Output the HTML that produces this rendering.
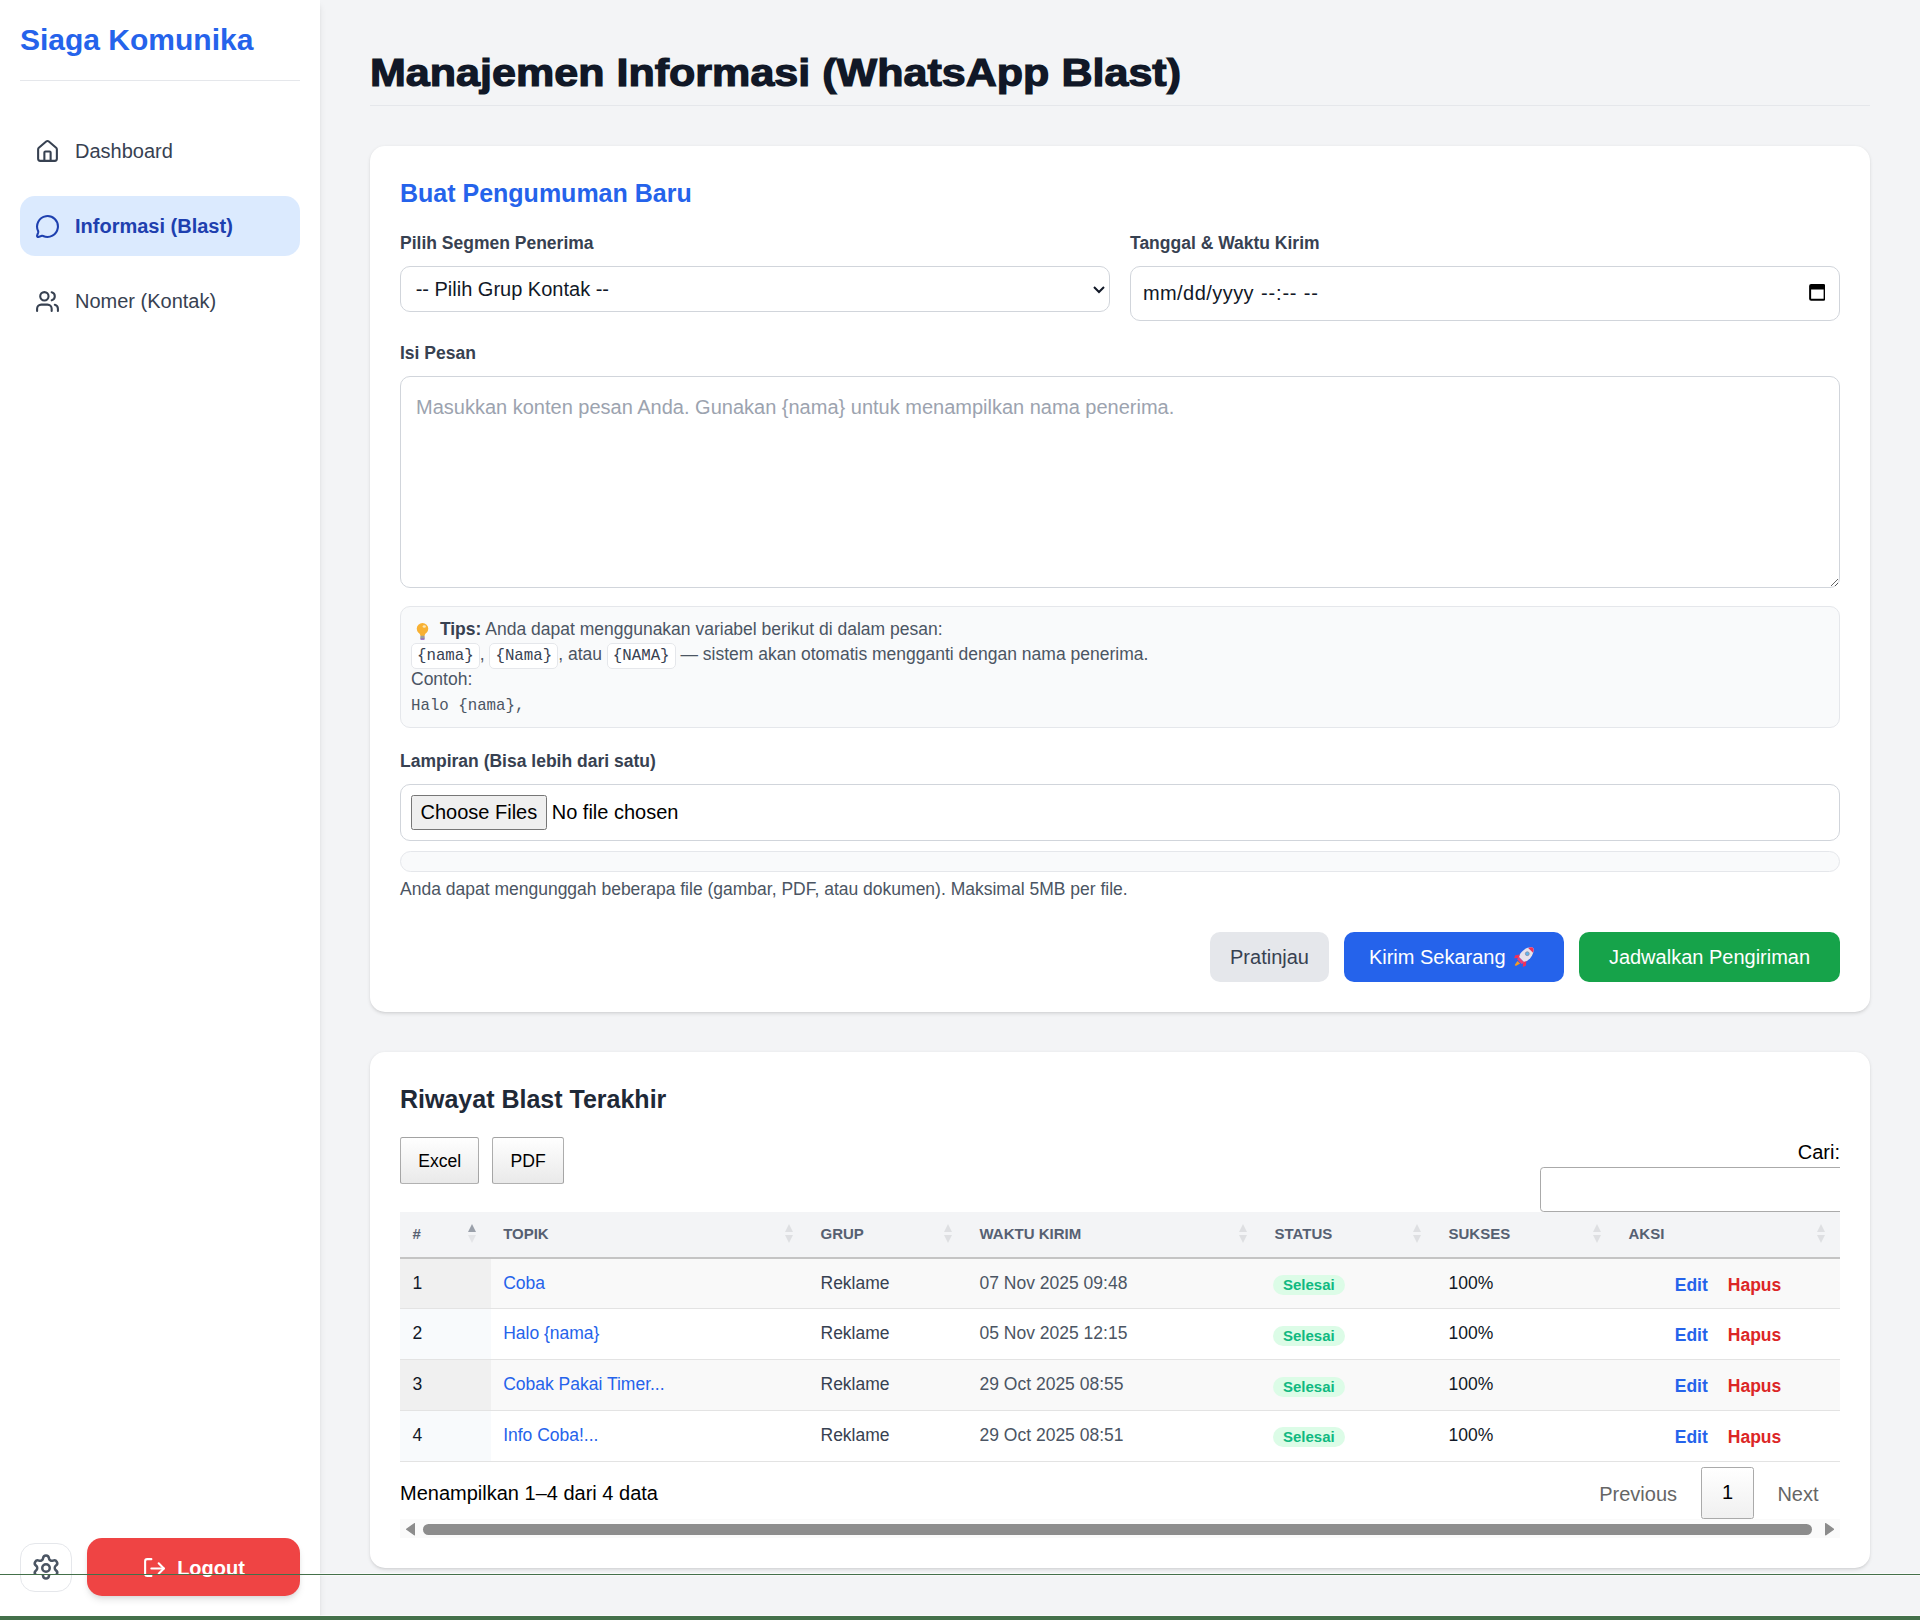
<!DOCTYPE html>
<html lang="id">
<head>
<meta charset="utf-8">
<title>Manajemen Informasi</title>
<style>
*{box-sizing:border-box;margin:0;padding:0}
html{zoom:1.25}
body{font-family:"Liberation Sans",sans-serif;font-size:16px;line-height:24px;background:#f3f4f6;color:#111827;width:1536px;height:1296px;position:relative;overflow:hidden}
svg{display:block}
/* sidebar */
.sb{position:absolute;left:0;top:0;width:256px;height:1296px;background:#fff;box-shadow:0 4px 6px -1px rgba(0,0,0,.1),0 2px 4px -2px rgba(0,0,0,.1);padding:16px;z-index:2}
.logo{font-size:24px;line-height:32px;font-weight:700;color:#2563eb;padding-bottom:16px;border-bottom:1px solid #e5e7eb}
.nav{margin-top:32px}
.ni{display:flex;align-items:center;height:48px;padding:0 12px;border-radius:12px;color:#374151;margin-bottom:12px}
.ni svg{width:20px;height:20px;margin-right:12px;flex:none}
.ni.act{background:#dbeafe;color:#1e40af;font-weight:700}
.sbb{position:absolute;left:16px;bottom:0;width:224px;height:80px}
.gear{position:absolute;left:0;top:18px;width:41.6px;height:41.4px;border:1px solid #e5e7eb;border-radius:12px;display:flex;align-items:center;justify-content:center;color:#4b5563}
.logout{position:absolute;left:53.6px;top:14.5px;width:170.4px;height:48.3px;background:#ef4444;color:#fff;border-radius:12px;font-weight:700;display:flex;align-items:center;justify-content:center;box-shadow:0 4px 6px -1px rgba(0,0,0,.1),0 2px 4px -2px rgba(0,0,0,.1)}
/* main */
.main{position:absolute;left:256px;top:0;width:1280px;padding:40px}
h1.t{height:45px;padding-bottom:8px;border-bottom:1px solid #e5e7eb;margin-bottom:32px;position:relative}
h1.t span{position:absolute;left:0;top:0.3px;font-size:31.2px;line-height:36px;font-weight:1000;color:#111827;white-space:nowrap;transform-origin:0 0;transform:scaleX(1.104)}
.card{background:#fff;border-radius:12px;box-shadow:0 1px 3px 0 rgba(0,0,0,.1),0 1px 2px -1px rgba(0,0,0,.1);padding:24px}
.h3b{font-size:20px;line-height:28px;font-weight:700;color:#2563eb;margin-bottom:16px}
.lbl{display:block;font-size:14px;line-height:20px;font-weight:700;color:#374151;margin-bottom:8px}
.grid{display:grid;grid-template-columns:1fr 1fr;gap:16px;margin-bottom:16px;align-items:start}
.inp{width:100%;border:1px solid #d1d5db;border-radius:8px;font-family:"Liberation Sans",sans-serif;font-size:16px;color:#111827;background:#fff}
select.inp{padding:8px 12px 8px 7.7px;height:36.4px;appearance:auto}
.date{height:43.7px;padding:8px 11px 8px 9.5px;display:flex;align-items:center;justify-content:space-between}
textarea.inp{display:block;height:169.6px;padding:12px;line-height:24px;resize:vertical}
textarea.inp::placeholder{color:#9ca3af}
.tips{margin-top:14.4px;background:#f9fafb;border:1px solid #e5e7eb;border-radius:8px;padding:8px;font-size:14px;line-height:20px;color:#4b5563}
.tips b{color:#374151}
.bulb{display:inline-block;vertical-align:-2px;margin:-4px 0}
.chip{font-family:"Liberation Mono",monospace;font-size:12.6px;background:#fff;border:1px solid #e5e7eb;border-radius:4px;padding:2.2px 4px;line-height:12px;color:#374151}
.mono{font-family:"Liberation Mono",monospace;font-size:12.6px;line-height:16.8px;color:#4b5563;margin-top:3.2px}
.file{height:46px;padding:8px;border:1px solid #d1d5db;border-radius:8px;display:flex;align-items:center;font-size:16px;color:#000}
.fbtn{height:28px;padding:0 6.8px;border:1px solid #767676;border-radius:2px;background:#efefef;display:flex;align-items:center;margin-right:4px;color:#000}
.prog{margin-top:7.8px;height:17px;border:1px solid #e5e7eb;border-radius:9999px;background:#f9fafb}
.help{font-size:14px;line-height:20px;color:#4b5563;margin-top:4px}
.btns{display:flex;justify-content:flex-end;margin-top:24px}
.btn{height:40px;display:flex;align-items:center;justify-content:center;border-radius:8px;font-size:16px;margin-left:12px}
/* table card */
.h3g{font-size:20px;line-height:28px;font-weight:700;color:#1f2937}
.dtb{display:flex;align-items:center;justify-content:center;height:37.9px;border:1px solid rgba(0,0,0,.3);border-radius:2px;background:linear-gradient(to bottom,#fff 0%,#e9e9e9 100%);font-size:14.08px;color:#000}
table{border-collapse:collapse;table-layout:fixed;width:1152px;font-size:14px;line-height:20px}
th{background:#f3f4f6;text-align:left;font-size:12px;line-height:16px;font-weight:700;color:#566072;text-transform:uppercase;letter-spacing:0;height:36.6px;padding:9.7px 10px 0;vertical-align:top;position:relative;border-bottom:1.6px solid #c4c4c4}
td{height:40.7px;padding:9.8px 10px 0;vertical-align:top;border-bottom:1px solid #e3e3e3;color:#111827;white-space:nowrap}
tr.odd td{background:#f9f9f9}
tr.odd td.s1{background:#f0f0f0}
tr.even td.s1{background:#f8fafc}
td.dt{color:#4b5563}
td.gp{color:#374151}
i.sa{position:absolute;right:11.7px;top:9.5px;width:6.4px;height:15px}
i.sa:before,i.sa:after{content:"";position:absolute;left:0;width:0;height:0;border-left:3.2px solid transparent;border-right:3.2px solid transparent}
i.sa:before{top:-0.3px;border-bottom:7px solid #dedfe2}
i.sa:after{top:8.8px;border-top:6.8px solid #dedfe2}
i.sa.on:before{border-bottom-color:#9aa0aa}
i.sa.on:after{border-top-color:#e3e4e7}
.badge{display:inline-block;position:relative;top:1px;background:#dcfce7;color:#10b981;font-size:12px;font-weight:700;line-height:16px;padding:0 8px;margin-left:-1.2px;border-radius:9999px}
a.lk{color:#2563eb;text-decoration:none}
td.ak{text-align:center;padding-top:11.2px}
.ed{color:#2563eb;font-weight:700;margin-right:16px}
.hp{color:#dc2626;font-weight:700}
.pg1{position:absolute;left:1041px;top:332px;width:42.2px;height:41.6px;border:1px solid #aaa;border-radius:2px;background:linear-gradient(to bottom,#fff 0%,#f0f0f0 100%);text-align:center;line-height:39.6px;font-size:16px;color:#000}
.hsb{position:absolute;left:0;top:373.8px;width:1152px;height:15px;background:#fafafa}
</style>
</head>
<body>
<!-- SIDEBAR -->
<div class="sb">
  <div class="logo">Siaga Komunika</div>
  <div class="nav">
    <div class="ni">
      <svg viewBox="0 0 24 24" fill="none" stroke="currentColor" stroke-width="2" stroke-linecap="round" stroke-linejoin="round"><path d="M15 21v-8a1 1 0 0 0-1-1h-4a1 1 0 0 0-1 1v8"/><path d="M3 10a2 2 0 0 1 .709-1.528l7-6a2 2 0 0 1 2.582 0l7 6A2 2 0 0 1 21 10v9a2 2 0 0 1-2 2H5a2 2 0 0 1-2-2z"/></svg>
      <span>Dashboard</span>
    </div>
    <div class="ni act">
      <svg viewBox="0 0 24 24" fill="none" stroke="currentColor" stroke-width="2" stroke-linecap="round" stroke-linejoin="round"><path d="M2.992 16.342a2 2 0 0 1 .094 1.167l-1.065 3.29a1 1 0 0 0 1.236 1.168l3.413-.998a2 2 0 0 1 1.099.092 10 10 0 1 0-4.777-4.719"/></svg>
      <span>Informasi (Blast)</span>
    </div>
    <div class="ni">
      <svg viewBox="0 0 24 24" fill="none" stroke="currentColor" stroke-width="2" stroke-linecap="round" stroke-linejoin="round"><path d="M16 21v-2a4 4 0 0 0-4-4H6a4 4 0 0 0-4 4v2"/><circle cx="9" cy="7" r="4"/><path d="M22 21v-2a4 4 0 0 0-3-3.87"/><path d="M16 3.13a4 4 0 0 1 0 7.75"/></svg>
      <span>Nomer (Kontak)</span>
    </div>
  </div>
  <div class="sbb">
    <div class="gear"><svg width="24" height="24" viewBox="0 0 24 24" fill="none" stroke="currentColor" stroke-width="2" stroke-linecap="round" stroke-linejoin="round"><path d="M9.671 4.136a2.34 2.34 0 0 1 4.659 0 2.34 2.34 0 0 0 3.319 1.915 2.34 2.34 0 0 1 2.33 4.033 2.34 2.34 0 0 0 0 3.831 2.34 2.34 0 0 1-2.33 4.033 2.34 2.34 0 0 0-3.319 1.915 2.34 2.34 0 0 1-4.659 0 2.34 2.34 0 0 0-3.32-1.915 2.34 2.34 0 0 1-2.33-4.033 2.34 2.34 0 0 0 0-3.831A2.34 2.34 0 0 1 6.35 6.051a2.34 2.34 0 0 0 3.319-1.915"/><circle cx="12" cy="12" r="3"/></svg></div>
    <div class="logout"><svg width="20" height="20" viewBox="0 0 24 24" fill="none" stroke="currentColor" stroke-width="2" stroke-linecap="round" stroke-linejoin="round" style="margin-right:8px"><path d="m16 17 5-5-5-5"/><path d="M21 12H9"/><path d="M9 21H5a2 2 0 0 1-2-2V5a2 2 0 0 1 2-2h4"/></svg>Logout</div>
  </div>
</div>

<div style="position:absolute;left:0;top:1260px;width:256px;height:32.8px;overflow:hidden;z-index:5;background:#fff;box-shadow:none"><div style="position:absolute;left:0;top:-45.84px;width:256px;height:80px"><div class="sbb" style="top:0;bottom:auto">
    <div class="gear"><svg width="24" height="24" viewBox="0 0 24 24" fill="none" stroke="currentColor" stroke-width="2" stroke-linecap="round" stroke-linejoin="round"><path d="M9.671 4.136a2.34 2.34 0 0 1 4.659 0 2.34 2.34 0 0 0 3.319 1.915 2.34 2.34 0 0 1 2.33 4.033 2.34 2.34 0 0 0 0 3.831 2.34 2.34 0 0 1-2.33 4.033 2.34 2.34 0 0 0-3.319 1.915 2.34 2.34 0 0 1-4.659 0 2.34 2.34 0 0 0-3.32-1.915 2.34 2.34 0 0 1-2.33-4.033 2.34 2.34 0 0 0 0-3.831A2.34 2.34 0 0 1 6.35 6.051a2.34 2.34 0 0 0 3.319-1.915"/><circle cx="12" cy="12" r="3"/></svg></div>
    <div class="logout"><svg width="20" height="20" viewBox="0 0 24 24" fill="none" stroke="currentColor" stroke-width="2" stroke-linecap="round" stroke-linejoin="round" style="margin-right:8px"><path d="m16 17 5-5-5-5"/><path d="M21 12H9"/><path d="M9 21H5a2 2 0 0 1-2-2V5a2 2 0 0 1 2-2h4"/></svg>Logout</div>
  </div></div></div>
<!-- MAIN -->
<div class="main">
  <h1 class="t"><span>Manajemen Informasi (WhatsApp Blast)</span></h1>

  <div class="card" id="c1">
    <div class="h3b">Buat Pengumuman Baru</div>
    <div class="grid">
      <div>
        <label class="lbl">Pilih Segmen Penerima</label>
        <select class="inp"><option>-- Pilih Grup Kontak --</option></select>
      </div>
      <div>
        <label class="lbl">Tanggal &amp; Waktu Kirim</label>
        <div class="inp date"><span style="position:relative;top:-0.2px"><span style="letter-spacing:0.36px">mm/dd/yyyy</span><span style="display:inline-block;width:5.6px"></span><span style="letter-spacing:0.65px">--:-- --</span></span><svg width="13.4" height="14.3" viewBox="0 0 13.4 14.3" style="position:relative;top:-1.6px"><rect x="0.9" y="1.6" width="11.6" height="11.8" rx="0.8" fill="none" stroke="#000" stroke-width="1.6"/><rect x="0.9" y="1.6" width="11.6" height="3.6" fill="#000"/></svg></div>
      </div>
    </div>
    <label class="lbl">Isi Pesan</label>
    <textarea class="inp" rows="6" placeholder="Masukkan konten pesan Anda. Gunakan {nama} untuk menampilkan nama penerima."></textarea>
    <div class="tips">
      <div><svg class="bulb" width="19.2" height="16" viewBox="0 0 19.2 16"><circle cx="9.2" cy="5.4" r="4.6" fill="#f8b133"/><path d="M6.6 8.2 L11.8 8.2 L10.8 11.2 L7.6 11.2 Z" fill="#f8b133"/><ellipse cx="10.6" cy="3.6" rx="1.3" ry="1" fill="#fde7b5"/><rect x="7.4" y="11" width="3.6" height="2.8" rx="0.8" fill="#9e9e9e"/><rect x="7.6" y="13.2" width="3.2" height="1" fill="#8e5cc4"/></svg> <b>Tips:</b> Anda dapat menggunakan variabel berikut di dalam pesan:</div>
      <div><span class="chip">{nama}</span>, <span class="chip">{Nama}</span>, atau <span class="chip">{NAMA}</span> — sistem akan otomatis mengganti dengan nama penerima.</div>
      <div>Contoh:</div>
      <div class="mono">Halo {nama},</div>
    </div>
    <label class="lbl" style="margin-top:16.6px">Lampiran (Bisa lebih dari satu)</label>
    <div class="file"><div class="fbtn">Choose Files</div>No file chosen</div>
    <div class="prog"></div>
    <div class="help">Anda dapat mengunggah beberapa file (gambar, PDF, atau dokumen). Maksimal 5MB per file.</div>
    <div class="btns">
      <div class="btn" style="background:#e5e7eb;color:#374151;width:95.2px">Pratinjau</div>
      <div class="btn" style="background:#2563eb;color:#fff;width:176px;justify-content:flex-start;padding-left:19.9px">Kirim Sekarang<svg width="19.2" height="19.2" viewBox="0 0 16 16" style="display:inline-block;margin-left:5.2px"><path d="M13.6 1.6 C10.6 1.4 7.6 2.8 5.6 5.6 L4.4 7.8 L8.2 11.6 L10.4 10.4 C13.2 8.4 14.6 5.4 14.4 2.4 Z" fill="#e6e1ec"/><path d="M13.6 1.6 C12.6 1.5 11.6 1.7 10.8 2 L14 5.2 C14.3 4.4 14.5 3.4 14.4 2.4 Z" fill="#f0305a"/><circle cx="10.2" cy="5.8" r="1.3" fill="#5fb4f0" stroke="#8a8a9a" stroke-width="0.5"/><path d="M5.2 6.4 L2.2 6.8 L1.4 8.8 L4.6 8.6 Z M9.6 10.8 L9.2 13.8 L7.2 14.6 L7.4 11.4 Z" fill="#f0305a"/><path d="M4.4 7.8 L8.2 11.6 L6.4 12.6 L3.4 9.6 Z" fill="#e8407a"/><path d="M3.6 10.6 L5.4 12.4 L2.6 14 L1.8 13.4 Z" fill="#f59a23"/></svg></div>
      <div class="btn" style="background:#16a34a;color:#fff;width:208.8px">Jadwalkan Pengiriman</div>
    </div>
  </div>

  <div class="card" id="c2" style="margin-top:32px;position:relative;height:412.6px">
    <div class="h3g">Riwayat Blast Terakhir</div>
    <div class="dtb" style="position:absolute;left:24px;top:67.8px;width:63.5px">Excel</div>
    <div class="dtb" style="position:absolute;left:97.9px;top:67.8px;width:57.1px">PDF</div>
    <div style="position:absolute;right:24px;top:67.9px;font-size:16px;line-height:24px;color:#000">Cari:</div>
    <div style="position:absolute;left:24px;top:0;width:1152px;height:412.6px;overflow:hidden">
      <div style="position:absolute;left:912.3px;top:92.1px;width:260px;height:35.4px;border:1px solid #aaa;border-radius:3px;background:#fff"></div>
      <table style="position:absolute;left:0;top:127.9px">
        <thead><tr>
          <th style="width:72.5px">#<i class="sa on"></i></th><th style="width:253.9px">Topik<i class="sa"></i></th><th style="width:127.2px">Grup<i class="sa"></i></th><th style="width:236px">Waktu Kirim<i class="sa"></i></th><th style="width:139.2px">Status<i class="sa"></i></th><th style="width:144px">Sukses<i class="sa"></i></th><th style="width:179.2px">Aksi<i class="sa"></i></th>
        </tr></thead>
        <tbody>
          <tr class="odd"><td class="s1">1</td><td><a class="lk">Coba</a></td><td class="gp">Reklame</td><td class="dt">07 Nov 2025 09:48</td><td><span class="badge">Selesai</span></td><td>100%</td><td class="ak"><span class="ed">Edit</span><span class="hp">Hapus</span></td></tr>
          <tr class="even"><td class="s1">2</td><td><a class="lk">Halo {nama}</a></td><td class="gp">Reklame</td><td class="dt">05 Nov 2025 12:15</td><td><span class="badge">Selesai</span></td><td>100%</td><td class="ak"><span class="ed">Edit</span><span class="hp">Hapus</span></td></tr>
          <tr class="odd"><td class="s1">3</td><td><a class="lk">Cobak Pakai Timer...</a></td><td class="gp">Reklame</td><td class="dt">29 Oct 2025 08:55</td><td><span class="badge">Selesai</span></td><td>100%</td><td class="ak"><span class="ed">Edit</span><span class="hp">Hapus</span></td></tr>
          <tr class="even"><td class="s1">4</td><td><a class="lk">Info Coba!...</a></td><td class="gp">Reklame</td><td class="dt">29 Oct 2025 08:51</td><td><span class="badge">Selesai</span></td><td>100%</td><td class="ak"><span class="ed">Edit</span><span class="hp">Hapus</span></td></tr>
        </tbody>
      </table>
      <div style="position:absolute;left:0;top:341px;font-size:16px;line-height:24px;color:#000">Menampilkan 1–4 dari 4 data</div>
      <div style="position:absolute;left:959.4px;top:341.3px;font-size:16px;line-height:24px;color:#666">Previous</div>
      <div class="pg1">1</div>
      <div style="position:absolute;left:1101.9px;top:341.3px;font-size:16px;line-height:24px;color:#666">Next</div>
      <div class="hsb">
        <svg style="position:absolute;left:4.7px;top:3px" width="7.4" height="10" viewBox="0 0 7.4 10"><path d="M0.6 5 L6.8 0.6 L6.8 9.4 Z" fill="#8c8c8c" stroke="#8c8c8c" stroke-width="1.2" stroke-linejoin="round"/></svg>
        <div style="position:absolute;left:18.3px;top:3.4px;width:1111px;height:9px;border-radius:5px;background:#8c8c8c"></div>
        <svg style="position:absolute;left:1139.8px;top:3px" width="7.4" height="10" viewBox="0 0 7.4 10"><path d="M6.8 5 L0.6 0.6 L0.6 9.4 Z" fill="#8c8c8c" stroke="#8c8c8c" stroke-width="1.2" stroke-linejoin="round"/></svg>
      </div>
    </div>
  </div>
</div>
<div style="position:fixed;left:256px;top:1258.7px;width:1280px;height:0.8px;background:rgba(255,255,255,.55);z-index:10"></div>
<div style="position:fixed;left:0;top:1259.5px;width:1536px;height:0.8px;background:#44704a;z-index:10"></div>
<div style="position:fixed;left:256px;top:1260.3px;width:1280px;height:0.8px;background:rgba(255,255,255,.55);z-index:10"></div>
<div style="position:fixed;left:256px;top:1292px;width:1280px;height:0.8px;background:rgba(255,255,255,.55);z-index:10"></div>
<div style="position:fixed;left:0;top:1292.8px;width:1536px;height:3.2px;background:#44704a;z-index:10"></div>
</body>
</html>
